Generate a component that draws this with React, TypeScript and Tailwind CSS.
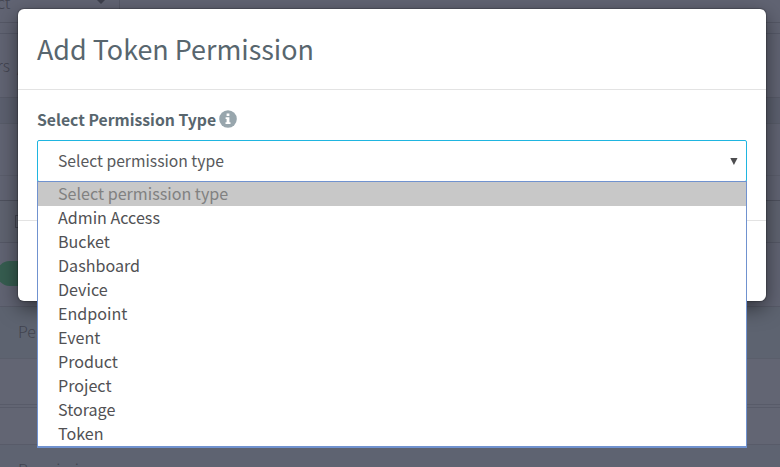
import React from 'react';

const options = ['Admin Access', 'Bucket', 'Dashboard', 'Device', 'Endpoint', 'Event', 'Product', 'Project', 'Storage', 'Token'];

function PageBehind() {
  return (
    <div className="flex h-full flex-col text-[16px] font-light text-[#41434f]">
      <div className="flex h-[23px] border-b border-[#555866] bg-[#616473]">
        <div className="relative h-full w-[120px] border-r border-[#565967]">
          <span className="absolute -left-[3px] -top-[10px] leading-[24px]">ct</span>
          <svg className="absolute left-[97px] top-0" width="8" height="4" viewBox="0 0 8 4"><path d="M0 0h8L4 4z" fill="#3e404d" /></svg>
        </div>
      </div>
      <div className="h-[11px] border-b border-[#565968] bg-[#616473]" />
      <div className="relative h-[64px] border-b border-[#575a68] bg-[#616473]">
        <span className="absolute -left-[3px] top-[19px] whitespace-pre leading-[24px]">rs  /</span>
      </div>
      <div className="h-[26px] border-b border-[#585c69] bg-[#5c606f]" />
      <div className="h-[52px] border-b border-[#5b5e6c] bg-[#616473]" />
      <div className="h-[25px] border-b border-[#4e515e] bg-[#616473]" />
      <div className="relative h-[42px] border-b border-[#555866] bg-[#5f6370]">
        <span className="absolute left-[15px] top-[14px] h-[13px] w-[12px] border border-[#444652]" />
      </div>
      <div className="relative h-[64px] border-b border-[#575a68] bg-[#616473]">
        <span className="absolute -left-[3px] top-[18px] h-[25px] w-[50px] rounded-full bg-[#365d50]" />
      </div>
      <div className="h-[52px] border-b border-[#5a5e6b] bg-[#5d6370] pl-[18px] pt-[12px] leading-[24px]">Pe</div>
      <div className="h-[46px] border-b border-[#585b69] bg-[#626573]" />
      <div className="h-[3px] border-b border-[#585b69] bg-[#626573]" />
      <div className="h-[37px] border-b border-[#585b69] bg-[#626573]" />
      <div className="h-[22px] overflow-hidden bg-[#5e6371] pl-[18px] pt-[12px] leading-[24px]">Permission</div>
    </div>
  );
}

function PermissionSelect() {
  return (
    <div className="relative mt-[8px]">
      <div className="flex h-[42px] items-center justify-between rounded-[2px] border border-[#1fb5e0] bg-white pl-5 pr-2 text-[#58595b]">
        <span className="text-[15.7px] leading-[22px]">Select permission type</span>
        <svg width="8" height="7" viewBox="0 0 8 7"><path d="M0.3 0h7.2L3.9 7z" fill="#4d4d4f" /></svg>
      </div>
      <ul className="absolute inset-x-0 top-[41px] z-10 h-[267px] border border-b-2 border-[#7092cf] bg-white text-[16.1px] leading-[22px] text-[#515154]">
        <li className="h-[24px] bg-[#c8c8c8] pl-5 text-[#818181]">Select permission type</li>
        {options.map((o) => (
          <li key={o} className="h-[24px] pl-5">{o}</li>
        ))}
      </ul>
    </div>
  );
}

export default function App() {
  return (
    <div className="relative h-[467px] w-[780px] overflow-hidden bg-[#616473] font-['Noto_Sans_CJK_SC',sans-serif]">
      <PageBehind />
      <div className="absolute left-[18px] top-[9px] flex h-[292px] w-[748px] flex-col rounded-[6px] bg-white shadow-[0_7px_20px_rgba(0,0,0,0.5),0_0_1px_1px_rgba(0,0,0,0.2)]">
        <header className="flex h-[81px] items-center border-b border-[#e3e3e3] px-[19px]">
          <h1 className="text-[26.9px] leading-[36px] text-[#58666e]">Add Token Permission</h1>
        </header>
        <div className="h-[131px] border-b border-[#e3e3e3] px-[19px] pt-[18px]">
          <label className="flex h-[24px] items-center gap-[3px] text-[15.75px] font-bold leading-[24px] text-[#58666e]">
            Select Permission Type
            <svg className="mb-[2px]" width="18" height="18" viewBox="0 0 18 18">
              <circle cx="9" cy="9" r="8.8" fill="#98a6ad" />
              <path d="M7.6 3.6h2.8v2.3H7.6zM6.6 7.3h3.8v4.9h1.1v1.7h-5v-1.7h1.1V9h-1z" fill="#fff" />
            </svg>
          </label>
          <PermissionSelect />
        </div>
      </div>
    </div>
  );
}
